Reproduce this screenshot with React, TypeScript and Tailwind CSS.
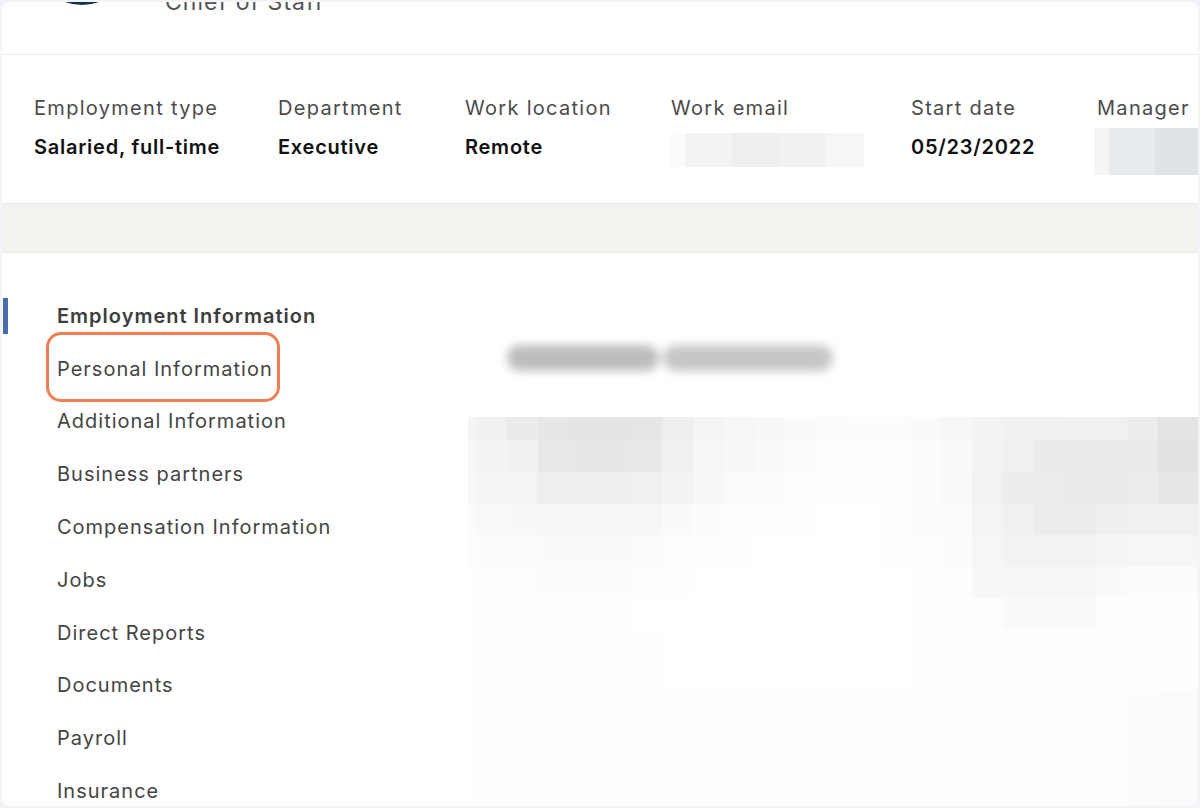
const fields = [
  { label: 'Employment type', value: 'Salaried, full-time', width: 'w-[183px]' },
  { label: 'Department', value: 'Executive', width: 'w-[126px]' },
  { label: 'Work location', value: 'Remote', width: 'w-[145px]' },
];

const navItems = [
  'Employment Information',
  'Personal Information',
  'Additional Information',
  'Business partners',
  'Compensation Information',
  'Jobs',
  'Direct Reports',
  'Documents',
  'Payroll',
  'Insurance',
];

// x edges of the mosaic columns, relative to the left of the blurred area
const mosaicCols = [0, 8, 39, 70, 101, 132, 163, 194, 225, 256, 287, 318, 349, 380, 411, 442, 473, 504, 535, 566, 597, 628, 659, 690, 721, 730];
const mosaicRows: { top: number; height: number; cells: string[] }[] = [
  { top: 0, height: 23, cells: 'f5 f1 eb e7 e4 e4 e6 ee f4 f6 f8 fa fb fc fc fa f7 f3 f1 f1 f0 f0 ed e4 e4'.split(' ') },
  { top: 23, height: 32, cells: 'f7 f3 f1 e8 e7 e7 e9 f0 f6 f8 fa fc fd fe fe fc f9 f3 f0 eb eb eb ea e2 e2'.split(' ') },
  { top: 55, height: 32, cells: 'f8 f5 f4 ee ee ee f0 f3 f8 fb fc fd fe fe fe fc f9 f2 ed ec eb eb ec e6 e6'.split(' ') },
  { top: 87, height: 31, cells: 'fb f9 f8 f6 f6 f6 f7 fa fc fd fe fe ff ff fe fc fb f4 f0 ec ec ef f0 f0 f0'.split(' ') },
  { top: 118, height: 32, cells: 'fd fc fb fa fa fa fb fd fe fe ff ff ff ff fe fd fc f6 f2 f2 f2 f5 f6 f6 f6'.split(' ') },
  { top: 150, height: 31, cells: 'fe fe fd fc fc fc fe fe ff ff ff ff ff ff ff fe fd f8 f7 f7 f7 fa fc fc fc'.split(' ') },
  { top: 181, height: 32, cells: 'fe fe fe fe fe fe ff ff ff ff ff ff ff ff ff fe fe fd fa fa fa fe fe fe fe'.split(' ') },
  { top: 213, height: 60, cells: 'fe fe fe fe fe fe fe ff ff ff ff ff ff ff ff fe fe fe fe fe fe fe fe fe fe'.split(' ') },
  { top: 273, height: 116, cells: 'fe fe fe fe fe fe fe fe fe fe fe fe fe fe fe fe fe fe fe fe fe fe fc fb fb'.split(' ') },
];

function Mosaic() {
  return (
    <svg width="730" height="389" viewBox="0 0 730 389" className="block shrink-0">
      {mosaicRows.map((row) =>
        row.cells.map((c, i) => (
          <rect
            key={`${row.top}-${i}`}
            x={mosaicCols[i]}
            y={row.top}
            width={mosaicCols[i + 1] - mosaicCols[i]}
            height={row.height}
            fill={`#${c}${c}${c}`}
          />
        ))
      )}
    </svg>
  );
}

function Field({ label, value, width }: { label: string; value: string; width: string }) {
  return (
    <div className={`${width} shrink-0 whitespace-nowrap`}>
      <div className="text-[20px] leading-[28px] tracking-[1.3px] text-[#4b4b4b]">{label}</div>
      <div className="mt-[11px] text-[20px] leading-[28px] font-semibold tracking-[0.75px] text-[#111111]">{value}</div>
    </div>
  );
}

export default function App() {
  return (
    <div className="h-[808px] w-[1200px] overflow-hidden bg-[#f3f3f8] p-[2px] font-['Inter',sans-serif]">
      <div className="h-[804px] overflow-hidden rounded-lg bg-white">
        {/* header, scrolled almost out of view */}
        <div className="flex h-[53px] items-start overflow-hidden border-b border-[#ececec]">
          <div className="ml-[30px] -mt-[97px] h-[100px] w-[100px] shrink-0 rounded-full bg-[#12324f]" />
          <div className="ml-[33px] -mt-[15px] text-[23px] leading-[30px] tracking-[1.05px] text-[#555555]">Chief of Staff</div>
        </div>

        {/* employment summary */}
        <div className="flex h-[149px] gap-[61px] overflow-hidden border-b border-[#e9e9e9] pl-[32px] pt-[39px]">
          {fields.map((f) => (
            <Field key={f.label} label={f.label} value={f.value} width={f.width} />
          ))}
          <div className="w-[179px] shrink-0">
            <div className="text-[20px] leading-[28px] tracking-[1.3px] text-[#4b4b4b]">Work email</div>
            <div className="-ml-[1px] mt-[11px] flex h-[34px] w-[194px]">
              <div className="w-[16px] bg-[#fbfbfa]" />
              <div className="w-[46px] bg-[#f3f3f2]" />
              <div className="w-[47px] bg-[#eeeeed]" />
              <div className="w-[47px] bg-[#f1f1f0]" />
              <div className="w-[38px] bg-[#f6f6f5]" />
            </div>
          </div>
          <Field label="Start date" value="05/23/2022" width="w-[125px]" />
          <div className="shrink-0">
            <div className="text-[20px] leading-[28px] tracking-[1.3px] text-[#4b4b4b]">Manager</div>
            <div className="-ml-[3px] mt-[6px] flex h-[47px] w-[104px]">
              <div className="w-[15px] bg-[#f5f5f6]" />
              <div className="w-[46px] bg-[#e8ebee]" />
              <div className="w-[43px] bg-[#dfe3e7]" />
            </div>
          </div>
        </div>

        <div className="h-[49px] border-b border-[#ebebe8] bg-[#f3f2ef]" />

        <div className="flex">
          <nav className="w-[466px] shrink-0 pt-[36.4px]">
            {navItems.map((item, i) => (
              <div key={item} className="relative flex h-[52.8px] items-center">
                <span className={i === 0 ? 'ml-[1px] h-[36px] w-[5px] bg-[#4a6cab]' : 'ml-[1px] h-[36px] w-[5px]'} />
                <span
                  className={
                    i === 0
                      ? 'ml-[49px] text-[20px] font-semibold tracking-[1px] text-[#3d3d3d]'
                      : 'ml-[49px] text-[20px] tracking-[1px] text-[#444444]'
                  }
                >
                  {item}
                </span>
                {item === 'Personal Information' && (
                  <div className="absolute left-[44px] top-[-10px] h-[70px] w-[234px] rounded-[15px] border-[3px] border-[#ee7f52]" />
                )}
              </div>
            ))}
          </nav>

          <div className="min-w-0 flex-1">
            <div className="ml-[39px] mt-[92px] flex h-[26px] w-[326px] gap-[4px] blur-[5px]">
              <div className="w-[152px] rounded-full bg-[#bdbdbd]" />
              <div className="w-[170px] rounded-full bg-[#c6c6c6]" />
            </div>
            <div className="mt-[46px]">
              <Mosaic />
            </div>
          </div>
        </div>
      </div>
    </div>
  );
}
